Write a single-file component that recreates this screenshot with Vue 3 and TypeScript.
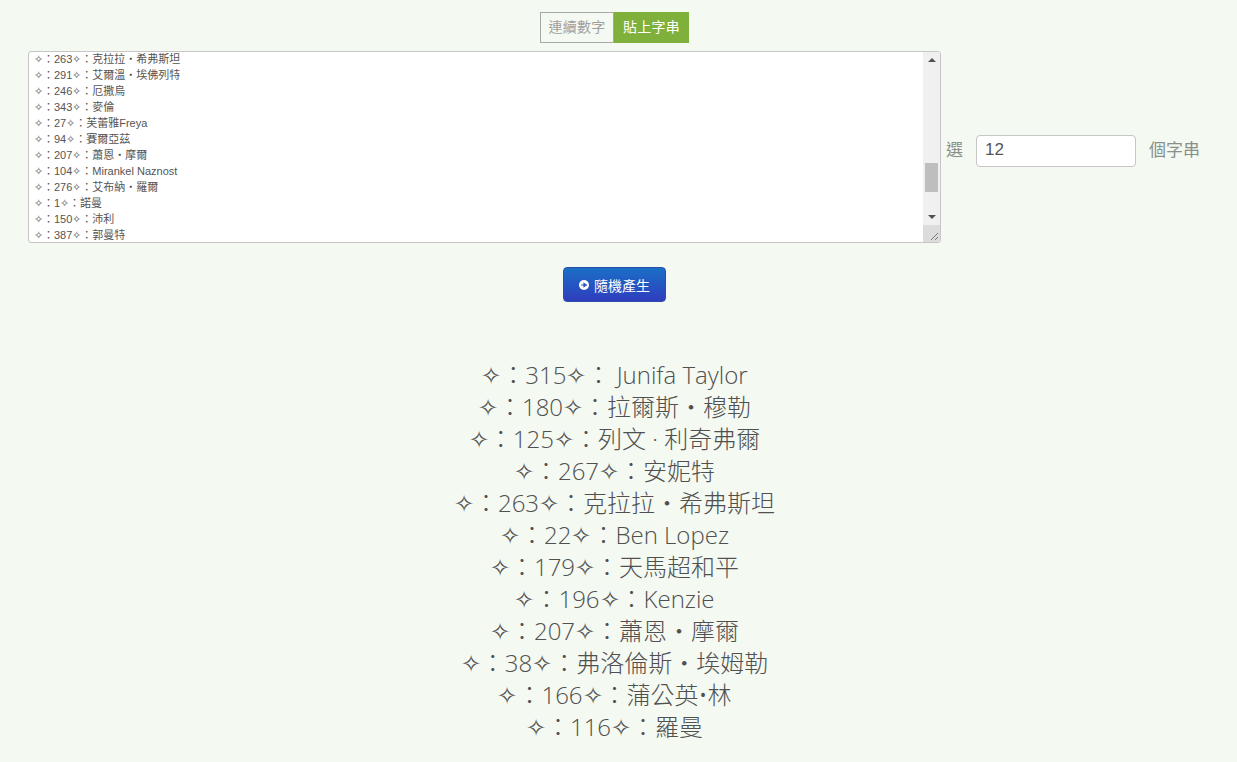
<script setup lang="ts">
const source: string[] = [
  '✧：263✧：克拉拉・希弗斯坦',
  '✧：291✧：艾爾溫・埃佛列特',
  '✧：246✧：厄撒烏',
  '✧：343✧：麥倫',
  '✧：27✧：芙蕾雅Freya',
  '✧：94✧：賽爾亞茲',
  '✧：207✧：蕭恩・摩爾',
  '✧：104✧：Mirankel Naznost',
  '✧：276✧：艾布納・羅爾',
  '✧：1✧：諾曼',
  '✧：150✧：沛利',
  '✧：387✧：郭曼特',
]
const results: string[] = [
  '✧：315✧： Junifa Taylor',
  '✧：180✧：拉爾斯・穆勒',
  '✧：125✧：列文 · 利奇弗爾',
  '✧：267✧：安妮特',
  '✧：263✧：克拉拉・希弗斯坦',
  '✧：22✧：Ben Lopez',
  '✧：179✧：天馬超和平',
  '✧：196✧：Kenzie',
  '✧：207✧：蕭恩・摩爾',
  '✧：38✧：弗洛倫斯・埃姆勒',
  '✧：166✧：蒲公英•林',
  '✧：116✧：羅曼',
]
</script>

<template>
  <main class="page">
    <div class="tabs">
      <button class="tab">連續數字</button>
      <button class="tab active">貼上字串</button>
    </div>

    <section class="input-row">
      <div class="textbox">
        <div class="lines">
          <div v-for="line in source" :key="line" class="line">{{ line }}</div>
        </div>
        <div class="scrollbar">
          <span class="arrow up"></span>
          <div class="track"><div class="thumb"></div></div>
          <span class="arrow down"></span>
          <div class="corner">
            <svg width="17" height="17" viewBox="0 0 17 17">
              <path d="M8 15 L15 8 M12 15 L15 12" stroke="#777" stroke-width="1" fill="none" />
            </svg>
          </div>
        </div>
      </div>
      <div class="count">
        <span class="count-label">選</span>
        <input class="count-input" type="text" value="12" />
        <span class="count-label">個字串</span>
      </div>
    </section>

    <div class="action">
      <button class="generate">
        <svg width="10" height="10" viewBox="0 0 10 10">
          <circle cx="5" cy="5" r="5" fill="#fff" />
          <path d="M2 5 H6 M5 3.4 L7.4 5 L5 6.6 Z" stroke="#2a55c0" stroke-width="1.2" fill="#2a55c0" />
        </svg>
        隨機產生
      </button>
    </div>

    <section class="results">
      <div v-for="item in results" :key="item" class="result">{{ item }}</div>
    </section>
  </main>
</template>

<style>
html, body {
  margin: 0;
  background: #f4f9f2;
}
</style>

<style scoped>
.page {
  display: flex;
  flex-direction: column;
  height: 762px;
  box-sizing: border-box;
  padding: 12px 8px 0 0;
  overflow: hidden;
  background: #f4f9f2;
  font-family: "Liberation Sans", "Noto Sans CJK TC", sans-serif;
}
.tabs {
  display: flex;
  justify-content: center;
}
.tab {
  width: 74px;
  height: 31px;
  box-sizing: border-box;
  padding: 0 0 3px;
  border: 1px solid #a8a8a8;
  background: transparent;
  color: #a0a0a0;
  font: 14px "Liberation Sans", "Noto Sans CJK TC", sans-serif;
  letter-spacing: 0.2px;
}
.tab.active {
  width: 75px;
  border-color: #80b03c;
  background: #80b03c;
  color: #fff;
}
.input-row {
  display: flex;
  align-items: center;
  margin-top: 8px;
  padding-left: 28px;
}
.textbox {
  display: flex;
  flex: none;
  width: 913px;
  height: 192px;
  box-sizing: border-box;
  border: 1px solid #c6c6c6;
  border-radius: 3px;
  background: #fff;
  overflow: hidden;
}
.lines {
  flex: 1;
  height: 190px;
  padding-left: 5px;
  overflow: hidden;
  color: #555;
  font-size: 11px;
  line-height: 16px;
}
.line {
  height: 16px;
  white-space: nowrap;
  transform: translateY(-1px);
}
.scrollbar {
  display: flex;
  flex-direction: column;
  align-items: center;
  width: 17px;
  background: #f0f0f0;
}
.arrow {
  flex: none;
  width: 0;
  height: 0;
  border-left: 4px solid transparent;
  border-right: 4px solid transparent;
}
.arrow.up {
  margin-top: 6px;
  border-bottom: 4px solid #505050;
}
.arrow.down {
  margin-bottom: 6px;
  border-top: 4px solid #505050;
}
.track {
  flex: 1;
  width: 100%;
  position: relative;
}
.thumb {
  position: absolute;
  top: 101px;
  left: 2px;
  width: 13px;
  height: 29px;
  background: #bebebe;
}
.corner {
  flex: none;
  width: 17px;
  height: 17px;
  background: #dcdcdc;
}
.corner svg {
  display: block;
}
.count {
  display: flex;
  flex: none;
  align-items: center;
  margin: 8px 0 0 5px;
  color: #8a8f8a;
  font-size: 17px;
}
.count-label {
  margin-bottom: 6px;
}
.count-input {
  width: 160px;
  height: 32px;
  box-sizing: border-box;
  margin: 0 13px;
  padding: 0 8px 2px;
  border: 1px solid #c6c6c6;
  border-radius: 4px;
  background: #fff;
  color: #555;
  font: 17px "Liberation Sans", sans-serif;
}
.action {
  display: flex;
  justify-content: center;
  margin-top: 24px;
}
.generate {
  display: flex;
  align-items: center;
  justify-content: center;
  gap: 5px;
  width: 103px;
  height: 35px;
  padding: 0;
  border: 1px solid #2a4fa8;
  border-radius: 4px;
  background: linear-gradient(#1a6fc6, #2f3dbd);
  color: #fff;
  font: 14px "Liberation Sans", "Noto Sans CJK TC", sans-serif;
}
.results {
  margin-top: 57px;
  color: #505050;
  font-family: "Open Sans", "Noto Sans CJK TC", "DejaVu Sans", sans-serif;
  font-size: 24px;
  font-weight: 300;
  line-height: 32px;
  text-align: center;
}
.result {
  height: 32px;
  white-space: nowrap;
}
</style>
